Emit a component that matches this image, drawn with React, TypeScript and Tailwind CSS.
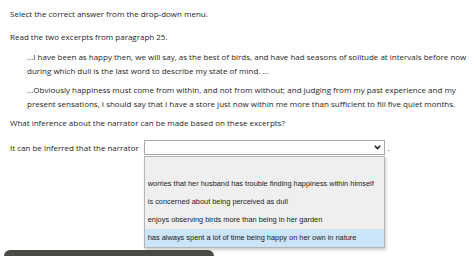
import React from 'react';

const options = [
  '',
  'worries that her husband has trouble finding happiness within himself',
  'is concerned about being perceived as dull',
  'enjoys observing birds more than being in her garden',
  'has always spent a lot of time being happy on her own in nature',
];

export default function App() {
  return (
    <div className="relative w-[474px] h-[256px] overflow-hidden bg-white text-[#262626] font-['Open_Sans',sans-serif] text-[8px] leading-[14px]">
      <div className="pl-[10px] pr-[4px] pt-[7px]">
        <p>Select the correct answer from the drop-down menu.</p>
        <p className="mt-[9px]">Read the two excerpts from paragraph 25.</p>

        <div className="pl-[17px] mt-[6px]">
          <p>
            ...I have been as happy then, we will say, as the best of birds, and have had seasons of solitude at intervals before now
            during which dull is the last word to describe my state of mind. ...
          </p>
          <p className="mt-[5px]">
            ...Obviously happiness must come from within, and not from without; and judging from my past experience and my
            present sensations, I should say that I have a store just now within me more than sufficient to fill five quiet months.
          </p>
        </div>

        <p className="mt-[5px]">What inference about the narrator can be made based on these excerpts?</p>

        <div className="mt-[10px] flex items-center">
          <span>It can be inferred that the narrator</span>
          <div className="relative ml-[5px]">
            <div className="w-[241px] h-[15px] border border-[#a9a9a9] bg-white flex items-center justify-end pr-[3px]">
              <svg width="7" height="5" viewBox="0 0 7 5">
                <path d="M0.8 0.8 L3.5 3.6 L6.2 0.8" fill="none" stroke="#222" strokeWidth="1.6" />
              </svg>
            </div>
            <div className="absolute left-0 top-[16px] w-[241px] overflow-hidden bg-[#efefef] border border-[#b5b5b5] shadow-[1px_2px_3px_rgba(0,0,0,0.2)] font-['Liberation_Sans',sans-serif] text-[7.4px] text-[#1a1a1a]">
              {options.map((o, i) => (
                <div
                  key={i}
                  className={`h-[18px] leading-[18px] px-[3px] whitespace-nowrap ${i === options.length - 1 ? 'bg-[#cce4f7]' : ''}`}
                >
                  {o}
                </div>
              ))}
            </div>
          </div>
          <span className="ml-[3px]">.</span>
        </div>
      </div>

      <div className="absolute left-[4px] top-[250px] w-[210px] h-[10px] rounded-t-[6px] bg-[#4a4a44]" />
    </div>
  );
}
